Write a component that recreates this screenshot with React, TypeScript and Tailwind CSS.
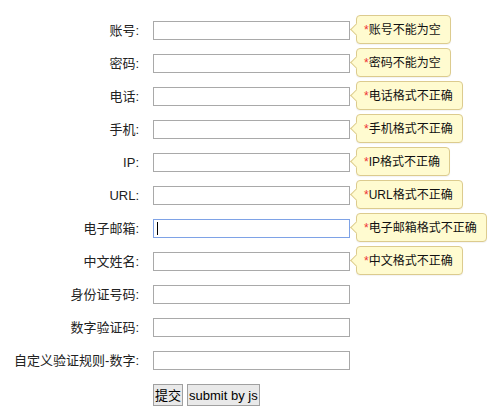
import React from 'react';

const rows = [
  { label: '账号:', tip: '账号不能为空' },
  { label: '密码:', tip: '密码不能为空' },
  { label: '电话:', tip: '电话格式不正确' },
  { label: '手机:', tip: '手机格式不正确' },
  { label: 'IP:', tip: 'IP格式不正确' },
  { label: 'URL:', tip: 'URL格式不正确' },
  { label: '电子邮箱:', tip: '电子邮箱格式不正确', focused: true },
  { label: '中文姓名:', tip: '中文格式不正确' },
  { label: '身份证号码:' },
  { label: '数字验证码:' },
  { label: '自定义验证规则-数字:' },
];

const Tip = ({ text }: { text: string }) => (
  <div className="absolute left-[203px] top-[-6px] h-[29px] flex items-center whitespace-nowrap rounded-[4px] border border-[#dccb8e] bg-[#fffbd0] pl-[7px] pr-[9px] text-[12px] text-[#111] shadow-[0_1px_1px_rgba(0,0,0,0.05)]">
    <span className="absolute left-[-5px] top-[9px] w-[9px] h-[9px] rotate-45 border-l border-b border-[#dccb8e] bg-[#fffbd0]" />
    <span className="relative text-[#e33]">*</span>
    <span className="relative">{text}</span>
  </div>
);

const App = () => {
  return (
    <div className="min-h-screen bg-white pt-[14px] text-[13px] text-[#222] font-['Liberation_Sans','Noto_Sans_CJK_SC',sans-serif]">
      <form onSubmit={(e) => e.preventDefault()}>
        {rows.map((r) => (
          <div key={r.label} className="flex items-center h-[33px]">
            <label className="w-[139px] text-right whitespace-nowrap">{r.label}</label>
            <div className="relative ml-[14px]">
              <input
                type="text"
                className={
                  'block w-[197px] h-[19px] border bg-white outline-none ' +
                  (r.focused ? 'border-[#7ea2e6]' : 'border-[#a9a9a9]')
                }
              />
              {r.focused && <span className="absolute left-[4px] top-[3px] w-[1px] h-[13px] bg-black" />}
              {r.tip && <Tip text={r.tip} />}
            </div>
          </div>
        ))}
        <div className="flex gap-[4px] pl-[153px] mt-[7px]">
          <button type="submit" className="h-[22px] px-[1px] border border-[#a0a0a0] bg-[#e9e9e9] text-[13px] text-black leading-none">
            提交
          </button>
          <button type="button" className="h-[22px] px-[1px] border border-[#a0a0a0] bg-[#e9e9e9] text-[13px] text-black leading-none">
            submit by js
          </button>
        </div>
      </form>
    </div>
  );
};

export default App;
